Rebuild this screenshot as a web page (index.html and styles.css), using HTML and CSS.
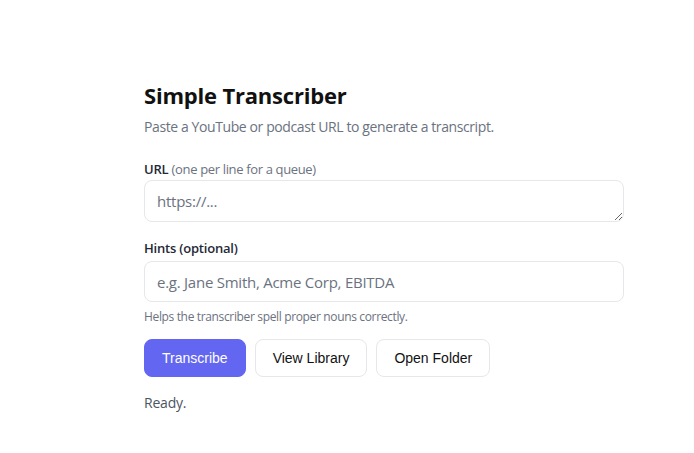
FILE: index.html
```html
<!DOCTYPE html>
<html lang="en">
<head>
<meta charset="utf-8">
<title>Simple Transcriber</title>
<link rel="stylesheet" href="styles.css">
</head>
<body>
<main class="app">
  <h1 class="title">Simple Transcriber</h1>
  <p class="subtitle">Paste a YouTube or podcast URL to generate a transcript.</p>

  <label class="label label-url" for="url">URL <span class="label-note">(one per line for a queue)</span></label>
  <textarea id="url" class="field field-area" placeholder="https://..."></textarea>

  <label class="label label-hints" for="hints">Hints (optional)</label>
  <input id="hints" class="field field-input" type="text" placeholder="e.g. Jane Smith, Acme Corp, EBITDA">
  <p class="help">Helps the transcriber spell proper nouns correctly.</p>

  <div class="actions">
    <button class="btn btn-primary" type="button">Transcribe</button>
    <button class="btn" type="button">View Library</button>
    <button class="btn" type="button">Open Folder</button>
  </div>

  <p class="status">Ready.</p>
</main>
</body>
</html>
```

FILE: styles.css
```css
html, body {
  margin: 0;
  padding: 0;
  background: #ffffff;
}

body {
  font-family: "Open Sans", "Noto Sans", "Liberation Sans", sans-serif;
  color: #111827;
}

.app {
  width: 480px;
  padding: 80px 0 0 144px;
  display: flex;
  flex-direction: column;
}

.title {
  margin: 0;
  font-size: 22px;
  line-height: 30px;
  font-weight: 700;
  color: #111111;
  letter-spacing: -0.2px;
}

.subtitle {
  margin: 7px 0 0;
  font-size: 14px;
  line-height: 20px;
  color: #6b7280;
  letter-spacing: -0.4px;
}

.label {
  font-size: 13px;
  line-height: 18px;
  font-weight: 600;
  color: #1f2937;
  letter-spacing: -0.2px;
}

.label-url {
  margin-top: 23px;
}

.label-note {
  font-size: 13px;
  font-weight: 400;
  color: #6b7280;
  letter-spacing: -0.35px;
}

.label-hints {
  margin-top: 17px;
}

.field {
  box-sizing: border-box;
  width: 480px;
  border: 1px solid #e5e7eb;
  border-radius: 8px;
  background: #ffffff;
  font-family: "Open Sans", "Noto Sans", "Liberation Sans", sans-serif;
  font-size: 15px;
  color: #111827;
  padding: 9px 12px;
  outline: none;
  letter-spacing: -0.25px;
}

.field::placeholder {
  color: #6b7280;
}

.field-area {
  margin-top: 2px;
  height: 42px;
  line-height: 22px;
  resize: vertical;
}

.field-input {
  margin-top: 4px;
  height: 41px;
  line-height: 22px;
}

.help {
  margin: 6px 0 0;
  font-size: 12px;
  line-height: 18px;
  color: #6b7280;
  letter-spacing: -0.35px;
}

.actions {
  display: flex;
  gap: 9px;
  margin-top: 13px;
}

.btn {
  box-sizing: border-box;
  height: 38px;
  padding: 0 17px;
  border: 1px solid #e5e7eb;
  border-radius: 8px;
  background: #ffffff;
  font-family: "Liberation Sans", Arial, sans-serif;
  font-size: 14px;
  color: #111111;
  cursor: pointer;
}

.btn-primary {
  background: #6366f1;
  border-color: #6366f1;
  color: #ffffff;
}

.status {
  margin: 16px 0 0;
  font-size: 14px;
  line-height: 20px;
  color: #4b5563;
  letter-spacing: -0.2px;
}
```
